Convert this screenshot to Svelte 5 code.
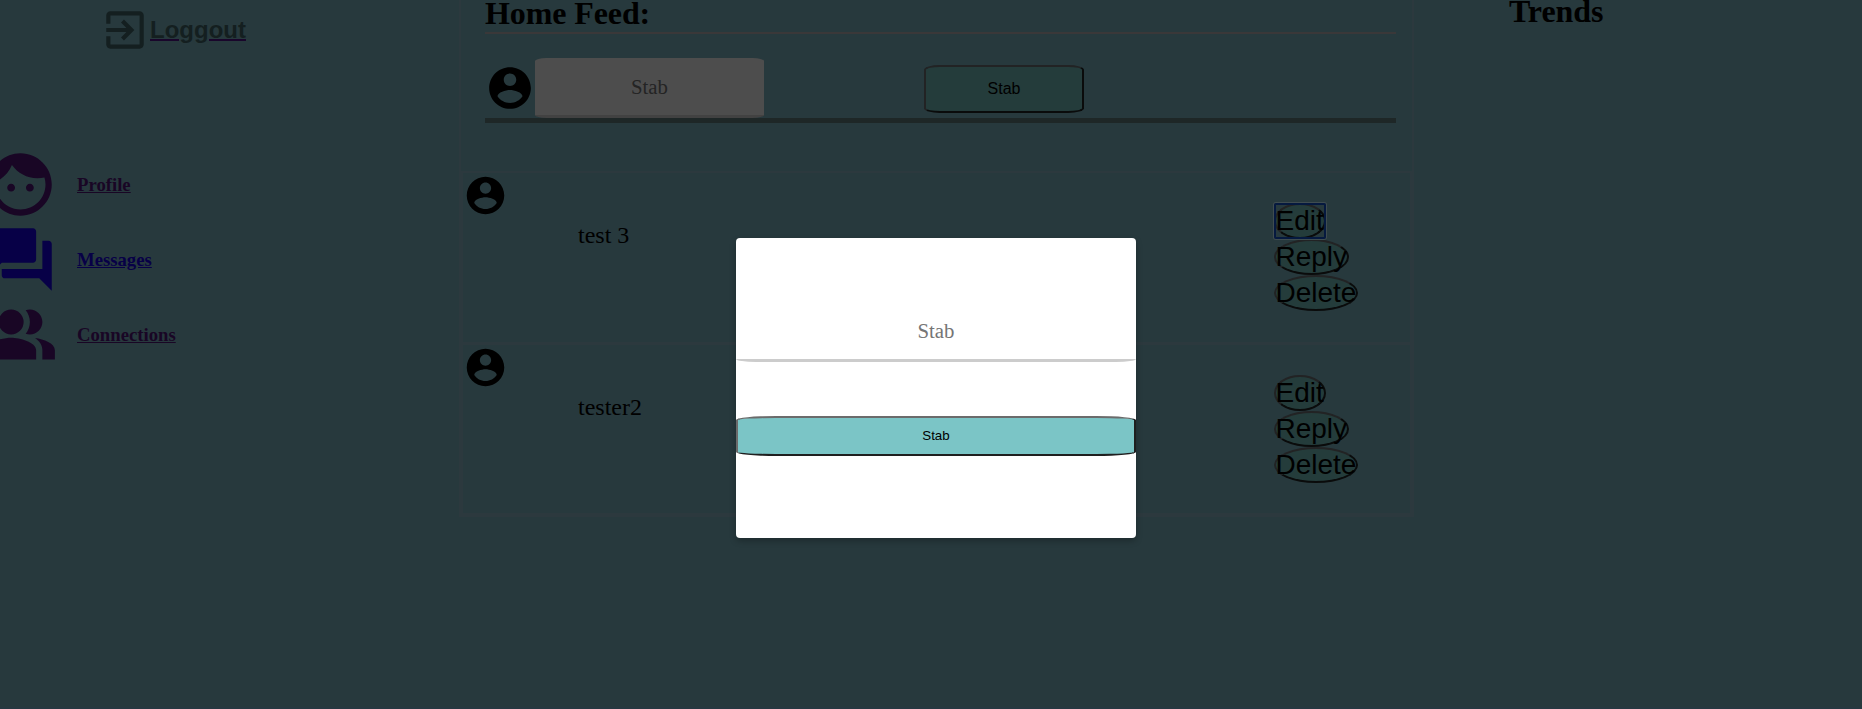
<script>
  const links = [
    { label: 'Profile', icon: 'face', tone: 'visited' },
    { label: 'Messages', icon: 'chat', tone: 'fresh' },
    { label: 'Connections', icon: 'people', tone: 'visited' }
  ];
  const posts = [
    { text: 'test 3', focused: true },
    { text: 'tester2', focused: false }
  ];
  const paths = {
    face: 'M9 11.75c-.69 0-1.25.56-1.25 1.25s.56 1.25 1.25 1.25 1.25-.56 1.25-1.25-.56-1.25-1.25-1.25zm6 0c-.69 0-1.25.56-1.25 1.25s.56 1.25 1.25 1.25 1.25-.56 1.25-1.25-.56-1.25-1.25-1.25zM12 2C6.48 2 2 6.48 2 12s4.48 10 10 10 10-4.48 10-10S17.52 2 12 2zm0 18c-4.41 0-8-3.59-8-8 0-.29.02-.58.05-.86 2.36-1.05 4.23-2.98 5.21-5.37C11.07 8.33 14.05 10 17.42 10c.78 0 1.53-.09 2.25-.26.21.71.33 1.47.33 2.26 0 4.41-3.59 8-8 8z',
    chat: 'M21 6h-2v9H6v2c0 .55.45 1 1 1h11l4 4V7c0-.55-.45-1-1-1zm-4 6V3c0-.55-.45-1-1-1H3c-.55 0-1 .45-1 1v14l4-4h10c.55 0 1-.45 1-1z',
    people: 'M16.67 13.13C18.04 14.06 19 15.32 19 17v3h4v-3c0-2.18-3.57-3.47-6.33-3.87zM15 12c2.21 0 4-1.79 4-4s-1.79-4-4-4c-.47 0-.91.1-1.33.24C14.5 5.27 15 6.58 15 8s-.5 2.73-1.33 3.76c.42.14.86.24 1.33.24zM9 4a4 4 0 1 0 0 8 4 4 0 0 0 0-8zM9 13c-2.67 0-8 1.34-8 4v3h16v-3c0-2.66-5.33-4-8-4z',
    exit: 'M10.09 15.59L11.5 17l5-5-5-5-1.41 1.41L12.67 11H3v2h9.67l-2.58 2.59zM19 3H5c-1.11 0-2 .9-2 2v4h2V5h14v14H5v-4H3v4c0 1.1.89 2 2 2h14c1.1 0 2-.9 2-2V5c0-1.1-.9-2-2-2z',
    account: 'M12 2C6.48 2 2 6.48 2 12s4.48 10 10 10 10-4.48 10-10S17.52 2 12 2zm0 3c1.66 0 3 1.34 3 3s-1.34 3-3 3-3-1.34-3-3 1.34-3 3-3zm0 14.2c-2.5 0-4.71-1.28-6-3.22.03-1.99 4-3.08 6-3.08 1.99 0 5.97 1.09 6 3.08-1.29 1.94-3.5 3.22-6 3.22z'
  };
</script>

{#snippet icon(name, size)}
  <svg viewBox="0 0 24 24" width={size} height={size} fill="currentColor" aria-hidden="true"><path d={paths[name]} /></svg>
{/snippet}

<div class="page">
  <aside class="side">
    <a class="logout" href="#logout">{@render icon('exit', 50)}<span>Loggout</span></a>
    <nav>
      {#each links as link}
        <a class="link {link.tone}" href="#nav">{@render icon(link.icon, 75)}<span>{link.label}</span></a>
      {/each}
    </nav>
  </aside>

  <main class="feed">
    <section class="composer">
      <h1>Home Feed:</h1>
      <div class="row">
        {@render icon('account', 50)}
        <div class="field">Stab</div>
        <button class="send">Stab</button>
      </div>
    </section>
    <section class="posts">
      {#each posts as post}
        <article>
          {@render icon('account', 45)}
          <p>{post.text}</p>
          <div class="actions">
            <button class:focused={post.focused}>Edit</button>
            <button>Reply</button>
            <button>Delete</button>
          </div>
        </article>
      {/each}
    </section>
  </main>

  <aside class="trends"><h1>Trends</h1></aside>

  <div class="modal">
    <div class="field">Stab</div>
    <button>Stab</button>
  </div>
</div>

<style>
  :global(body) { background: #27393d; overflow: hidden; }
  .page {
    position: relative;
    display: grid;
    grid-template-columns: 459px 955px 448px;
    height: 709px;
    overflow: hidden;
    box-sizing: border-box;
    font-family: "Liberation Serif", "Times New Roman", serif;
    color: #000;
    border-bottom: 2px solid #273841;
  }
  svg { display: block; flex: none; }
  h1 { margin: 0; font-size: 32px; line-height: 36px; font-weight: 700; letter-spacing: -.1px; }
  button {
    margin: 0;
    box-sizing: border-box;
    font-family: "Liberation Sans", Arial, sans-serif;
    color: #000;
    background: #243c3b;
    border: 2px solid;
    border-color: #222324 #0a0b0b #0a0b0b #222324;
  }

  .side { overflow: hidden; }
  .logout {
    display: flex;
    align-items: center;
    margin: 5px 0 0 100px;
    height: 50px;
    color: #141f20;
    font: 700 24px/28px "Liberation Sans", Arial, sans-serif;
    text-decoration: none;
  }
  .logout span { text-decoration: underline #19062b 2px; }
  nav { margin: 92px 0 0 -17px; }
  .link {
    display: flex;
    align-items: center;
    gap: 19px;
    height: 75px;
    font-size: 18.72px;
    font-weight: 700;
    text-decoration: none;
  }
  .link span { text-decoration: underline; }
  .visited { color: #190625; }
  .fresh { color: #070047; }

  .feed {
    height: 517px;
    box-sizing: border-box;
    border: 2px solid #2c393e;
    border-top: 0;
  }
  .composer {
    height: 171px;
    box-sizing: border-box;
    padding: 0 16px 0 24px;
  }
  .composer h1 { height: 34px; box-sizing: border-box; border-bottom: 2px solid #3a3839; line-height: 27px; }
  .row {
    display: flex;
    align-items: center;
    height: 89px;
    box-sizing: border-box;
    padding-top: 24px;
    border-bottom: 5px solid #1e2727;
  }
  .field {
    box-sizing: border-box;
    height: 60px;
    border-bottom: 3px solid #424242;
    border-radius: 5%;
    font-size: 20.8px;
    line-height: 57px;
    text-align: center;
  }
  .row .field { width: 229px; background: #4d4d4d; color: #242424; }
  .send { width: 160px; height: 48px; margin: 2px 0 0 160px; border-radius: 10%; font-size: 16px; }

  .posts { border: 2px solid #2c393e; }
  article {
    display: grid;
    grid-template-columns: 115px 696px 1fr;
    height: 169px;
  }
  article + article { height: 168px; border-top: 3px solid #2c393e; }
  article p { margin: 48px 0 0; font-size: 24px; line-height: 28px; }
  .actions { display: flex; flex-direction: column; align-items: flex-start; padding-top: 30px; }
  .actions button {
    height: 36px;
    padding: 0;
    border-radius: 50%;
    font-size: 28px;
    line-height: 32px;
    text-indent: -.5px;
  }
  .actions .focused { position: relative; }
  .actions .focused::after {
    content: '';
    position: absolute;
    inset: -2px;
    border: 2px solid #05193f;
    border-radius: 2px;
    box-shadow: 0 0 0 1px #3f4c50;
  }

  .trends h1 { padding-left: 95px; line-height: 22px; }

  .modal {
    position: absolute;
    top: 238px;
    left: 736px;
    width: 400px;
    height: 300px;
    box-sizing: border-box;
    padding-top: 64px;
    display: flex;
    flex-direction: column;
    gap: 54px;
    background: #fff;
    border-radius: 4px;
    box-shadow: 0 3px 6px rgba(0, 0, 0, .25);
  }
  .modal .field { color: #757575; border-color: #ccc; }
  .modal button {
    height: 40px;
    padding: 0 6px 2px;
    border-radius: 10%;
    border-color: #6b6b6b #1f1f1f #1f1f1f #6b6b6b;
    background: #7bc5c6;
    font-size: 13.333px;
  }
</style>
